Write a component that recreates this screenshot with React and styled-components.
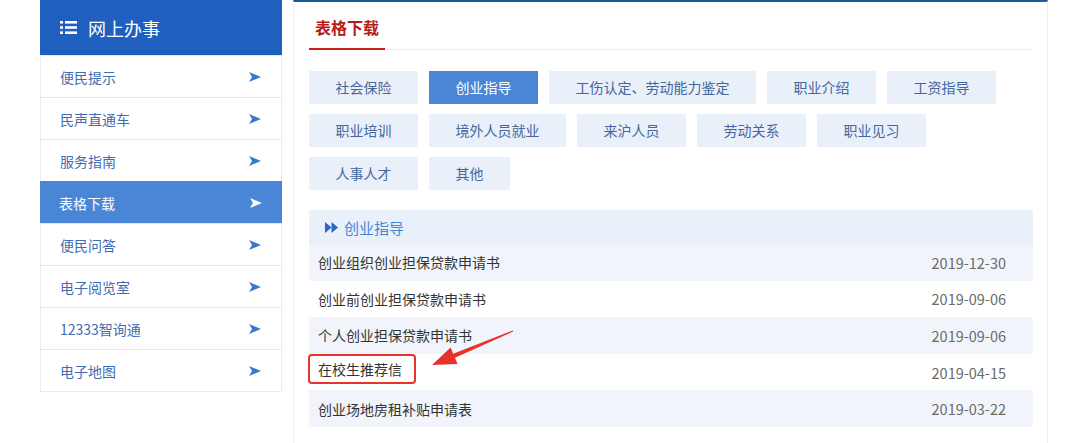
import React from "react";
import styled, { createGlobalStyle } from "styled-components";

const GlobalStyle = createGlobalStyle`
  html, body {
    margin: 0;
    padding: 0;
    background: #fff;
    font-family: "Noto Sans CJK SC", "Noto Sans", sans-serif;
  }
`;

const Page = styled.div`
  display: flex;
  align-items: flex-start;
  padding-left: 40px;
  height: 443px;
  overflow: hidden;
`;

const Sidebar = styled.aside`
  width: 242px;
  flex-shrink: 0;
  border: 1px solid #ebebeb;
  border-top: none;
  box-sizing: border-box;
`;

const SideHeader = styled.div`
  height: 55px;
  background: #1e5fbf;
  color: #fff;
  display: flex;
  align-items: center;
  padding-left: 20px;
  gap: 11px;
  font-size: 18px;
  margin: 0 -1px;
`;

const SideItem = styled.div`
  height: 41px;
  border-top: 1px solid #e8e8e8;
  display: flex;
  align-items: center;
  justify-content: space-between;
  padding: 0 20px 0 19px;
  font-size: 14px;
  color: ${(p) => (p.active ? "#fff" : "#3f6cb3")};
  background: ${(p) => (p.active ? "#4a86d6" : "#fff")};
  margin: ${(p) => (p.active ? "0 -1px" : "0")};
  border-top-color: ${(p) => (p.active ? "#4a86d6" : "#e8e8e8")};
`;

const Main = styled.main`
  width: 755px;
  margin-left: 11px;
  box-sizing: border-box;
  height: 443px;
  border-top: 2px solid #1f5a9e;
  border-left: 1px solid #eeeeee;
  border-right: 1px solid #eeeeee;
  padding: 0 14px 0 15px;
  position: relative;
`;

const TitleBar = styled.div`
  height: 47px;
  border-bottom: 1px solid #eeeeee;
  display: flex;
  align-items: flex-end;
`;

const TitleTab = styled.div`
  padding: 0 6px;
  height: 36px;
  line-height: 30px;
  font-size: 16px;
  font-weight: bold;
  color: #b81c15;
  border-bottom: 2px solid #c9201a;
  margin-bottom: -1px;
`;

const Tags = styled.div`
  display: flex;
  flex-wrap: wrap;
  gap: 10px 11px;
  margin-top: 21px;
`;

const Tag = styled.div`
  height: 33px;
  line-height: 33px;
  padding: 0 26.5px;
  font-size: 14px;
  color: ${(p) => (p.active ? "#fff" : "#46679c")};
  background: ${(p) => (p.active ? "#4a86d6" : "#e9f0fa")};
  white-space: nowrap;
`;

const List = styled.div`
  margin-top: 20px;
  position: relative;
`;

const ListHead = styled.div`
  height: 34px;
  background: #e8f0fa;
  display: flex;
  align-items: center;
  gap: 6px;
  padding-left: 16px;
  font-size: 15px;
  color: #4a86d6;
`;

const Row = styled.div`
  height: 36.6px;
  display: flex;
  align-items: center;
  justify-content: space-between;
  padding: 0 27px 0 9px;
  font-size: 14px;
  color: #333;
  background: ${(p) => (p.shaded ? "#f1f5fb" : "#fff")};
`;

const DateText = styled.span`
  color: #6a6a6a;
  font-size: 14.5px;
`;

const Marked = styled.span`
  border: 2px solid #e8322b;
  border-radius: 4px;
  margin-left: -10px;
  margin-top: -6px;
  padding: 3px 12px 3px 8px;
`;

const Annotation = styled.svg`
  position: absolute;
  left: 110px;
  top: 110px;
  pointer-events: none;
`;

const ListIcon = () => (
  <svg width="17" height="13" viewBox="0 0 17 13">
    <rect x="0" y="0" width="3" height="2.6" fill="#fff" />
    <rect x="5" y="0" width="12" height="2.6" fill="#fff" />
    <rect x="0" y="5.2" width="3" height="2.6" fill="#fff" />
    <rect x="5" y="5.2" width="12" height="2.6" fill="#fff" />
    <rect x="0" y="10.4" width="3" height="2.6" fill="#fff" />
    <rect x="5" y="10.4" width="12" height="2.6" fill="#fff" />
  </svg>
);

const NavArrow = ({ color }) => (
  <svg width="12" height="10" viewBox="0 0 12 10">
    <polygon points="0,0 12,5 0,10 3,5" fill={color} />
  </svg>
);

const DoubleArrow = () => (
  <svg width="13" height="11" viewBox="0 0 13 11">
    <polygon points="0,0 6.5,5.5 0,11" fill="#2a66c8" />
    <polygon points="6.5,0 13,5.5 6.5,11" fill="#2a66c8" />
  </svg>
);

const menu = [
  "便民提示",
  "民声直通车",
  "服务指南",
  "表格下载",
  "便民问答",
  "电子阅览室",
  "12333智询通",
  "电子地图",
];

const tags = [
  "社会保险",
  "创业指导",
  "工伤认定、劳动能力鉴定",
  "职业介绍",
  "工资指导",
  "职业培训",
  "境外人员就业",
  "来沪人员",
  "劳动关系",
  "职业见习",
  "人事人才",
  "其他",
];

const files = [
  ["创业组织创业担保贷款申请书", "2019-12-30"],
  ["创业前创业担保贷款申请书", "2019-09-06"],
  ["个人创业担保贷款申请书", "2019-09-06"],
  ["在校生推荐信", "2019-04-15", true],
  ["创业场地房租补贴申请表", "2019-03-22"],
];

export default function App() {
  return (
    <>
      <GlobalStyle />
      <Page>
        <Sidebar>
          <SideHeader>
            <ListIcon />
            <span>网上办事</span>
          </SideHeader>
          {menu.map((m) => {
            const active = m === "表格下载";
            return (
              <SideItem key={m} active={active}>
                <span>{m}</span>
                <NavArrow color={active ? "#fff" : "#3a78d0"} />
              </SideItem>
            );
          })}
        </Sidebar>
        <Main>
          <TitleBar>
            <TitleTab>表格下载</TitleTab>
          </TitleBar>
          <Tags>
            {tags.map((t) => (
              <Tag key={t} active={t === "创业指导"}>
                {t}
              </Tag>
            ))}
          </Tags>
          <List>
            <ListHead>
              <DoubleArrow />
              <span>创业指导</span>
            </ListHead>
            {files.map(([name, date, marked], i) => (
              <Row key={name} shaded={i % 2 === 0}>
                {marked ? <Marked>{name}</Marked> : <span>{name}</span>}
                <DateText>{date}</DateText>
              </Row>
            ))}
            <Annotation width="110" height="60" viewBox="0 0 110 60">
              <polygon
                points="13,45 38.6,44 36,37.7 94.2,11.5 93.8,10.5 34.2,33.7 31.6,27.4"
                fill="#e8322b"
              />
            </Annotation>
          </List>
        </Main>
      </Page>
    </>
  );
}
